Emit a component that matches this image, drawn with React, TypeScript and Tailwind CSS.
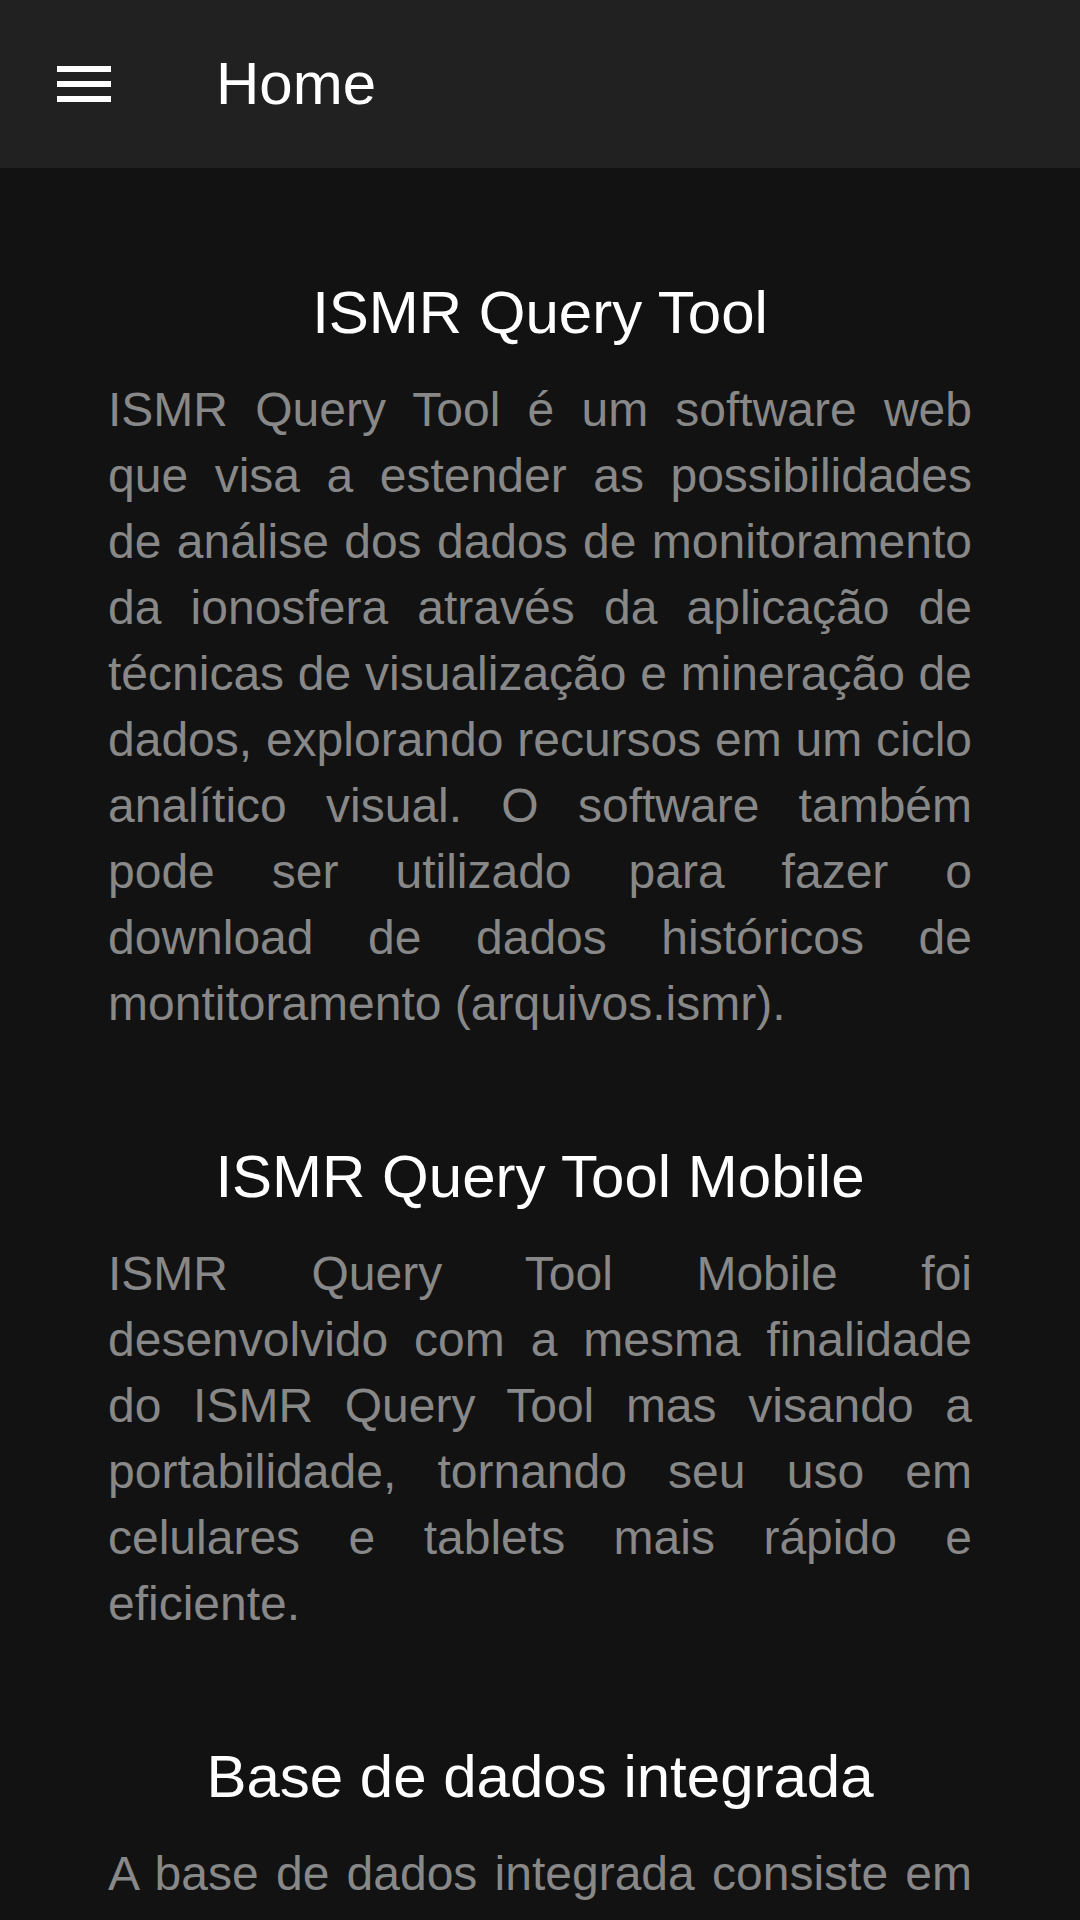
export default function App() {
  const secoes = [
    {
      titulo: 'ISMR Query Tool',
      texto:
        'ISMR Query Tool é um software web que visa a estender as possibilidades de análise dos dados de monitoramento da ionosfera através da aplicação de técnicas de visualização e mineração de dados, explorando recursos em um ciclo analítico visual. O software também pode ser utilizado para fazer o download de dados históricos de montitoramento (arquivos.ismr).',
    },
    {
      titulo: 'ISMR Query Tool Mobile',
      texto:
        'ISMR Query Tool Mobile foi desenvolvido com a mesma finalidade do ISMR Query Tool mas visando a portabilidade, tornando seu uso em celulares e tablets mais rápido e eficiente.',
    },
    {
      titulo: 'Base de dados integrada',
      texto:
        'A base de dados integrada consiste em um conjunto de dados de monitoramento da ionosfera coletados por estações espalhadas pelo território brasileiro.',
    },
  ];

  return (
    <div className="h-[1920px] overflow-hidden bg-[#121212] font-['Liberation_Sans',Arial,sans-serif]">
      {/* Toolbar */}
      <header className="h-[168px] bg-[#212121] flex items-center">
        <button className="ml-[48px] w-[72px] h-[72px] flex items-center justify-center">
          <svg width="72" height="72" viewBox="0 0 24 24" fill="#ffffff">
            <path d="M3 6h18v2H3zM3 11h18v2H3zM3 16h18v2H3z" />
          </svg>
        </button>
        <h1 className="ml-[96px] text-white text-[60px] leading-[69px] mt-[-2px]">Home</h1>
      </header>

      {/* Conteúdo */}
      <main className="px-[108px] pt-[110px] flex flex-col gap-[105px]">
        {secoes.map((secao, index) => (
          <section key={index}>
            <h2 className="text-white text-[60px] leading-[69px] text-center mb-[30px]">
              {secao.titulo}
            </h2>
            <p className="text-[#888888] text-[48px] leading-[66px] text-justify">{secao.texto}</p>
          </section>
        ))}
      </main>
    </div>
  );
}
